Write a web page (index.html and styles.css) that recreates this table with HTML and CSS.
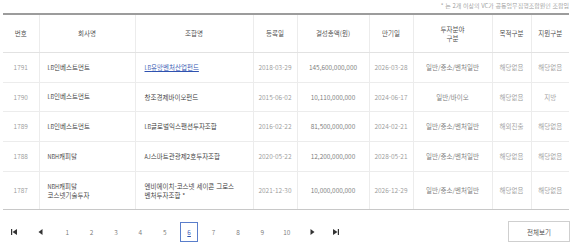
FILE: index.html
```html
<!DOCTYPE html>
<html lang="ko">
<head>
<meta charset="utf-8">
<link rel="stylesheet" href="styles.css">
</head>
<body>
<div class="page">
  <p class="note">* 는 2개 이상의 VC가 공동업무집행조합원인 조합임</p>
  <table class="list">
    <colgroup>
      <col class="c-no"><col class="c-co"><col class="c-fund"><col class="c-reg"><col class="c-amt"><col class="c-exp"><col class="c-field"><col class="c-purp"><col class="c-sup">
    </colgroup>
    <thead>
      <tr>
        <th>번호</th><th>회사명</th><th>조합명</th><th>등록일</th><th>결성총액(원)</th><th>만기일</th><th>투자분야<br>구분</th><th>목적구분</th><th>지원구분</th>
      </tr>
    </thead>
    <tbody>
      <tr>
        <td class="no">1791</td><td class="co"><span class="en">LB</span>인베스트먼트</td><td class="fund"><a href="#"><span class="en">LB</span>유망벤처산업펀드</a></td><td class="date">2018-03-29</td><td class="amt">145,600,000,000</td><td class="date">2026-03-28</td><td class="field">일반/중소/벤처일반</td><td class="etc">해당없음</td><td class="etc">해당없음</td>
      </tr>
      <tr class="r2">
        <td class="no">1790</td><td class="co"><span class="en">LB</span>인베스트먼트</td><td class="fund">창조경제바이오펀드</td><td class="date">2015-06-02</td><td class="amt">10,110,000,000</td><td class="date">2024-06-17</td><td class="field">일반/바이오</td><td class="etc">해당없음</td><td class="etc">지방</td>
      </tr>
      <tr>
        <td class="no">1789</td><td class="co"><span class="en">LB</span>인베스트먼트</td><td class="fund"><span class="en">LB</span>글로벌익스팬션투자조합</td><td class="date">2016-02-22</td><td class="amt">81,500,000,000</td><td class="date">2024-02-21</td><td class="field">일반/중소/벤처일반</td><td class="etc">해외진출</td><td class="etc">해당없음</td>
      </tr>
      <tr>
        <td class="no">1788</td><td class="co"><span class="en">NBH</span>캐피탈</td><td class="fund"><span class="en">AJ</span>스마트관광제2호투자조합</td><td class="date">2020-05-22</td><td class="amt">12,200,000,000</td><td class="date">2028-05-21</td><td class="field">일반/중소/벤처일반</td><td class="etc">해당없음</td><td class="etc">해당없음</td>
      </tr>
      <tr class="last">
        <td class="no">1787</td><td class="co"><span class="en">NBH</span>캐피탈<br>코스넷기술투자</td><td class="fund">엔비에이치-코스넷 세이콘 그로스<br>벤처투자조합 *</td><td class="date">2021-12-30</td><td class="amt">10,000,000,000</td><td class="date">2026-12-29</td><td class="field">일반/중소/벤처일반</td><td class="etc">해당없음</td><td class="etc">해당없음</td>
      </tr>
    </tbody>
  </table>
  <div class="bottom">
    <nav class="pager">
      <a class="pg icon first" href="#" aria-label="처음"><svg width="6" height="6" viewBox="0 0 6 6"><rect x="0" y="0" width="1.2" height="6" fill="#333"/><polygon points="6,0 6,6 1.5,3" fill="#333"/></svg></a>
      <a class="pg icon prev" href="#" aria-label="이전"><svg width="5" height="6" viewBox="0 0 5 6"><polygon points="4.5,0 4.5,6 0.5,3" fill="#333"/></svg></a>
      <a class="pg num" href="#">1</a>
      <a class="pg num" href="#">2</a>
      <a class="pg num" href="#">3</a>
      <a class="pg num" href="#">4</a>
      <a class="pg num" href="#">5</a>
      <a class="pg num on" href="#"><span>6</span></a>
      <a class="pg num" href="#">7</a>
      <a class="pg num" href="#">8</a>
      <a class="pg num" href="#">9</a>
      <a class="pg num" href="#">10</a>
      <a class="pg icon next" href="#" aria-label="다음"><svg width="5" height="6" viewBox="0 0 5 6"><polygon points="0.5,0 0.5,6 4.5,3" fill="#333"/></svg></a>
      <a class="pg icon last-p" href="#" aria-label="마지막"><svg width="6" height="6" viewBox="0 0 6 6"><polygon points="0,0 0,6 4.5,3" fill="#333"/><rect x="4.8" y="0" width="1.2" height="6" fill="#333"/></svg></a>
    </nav>
    <button class="all" type="button">전체보기</button>
  </div>
</div>
</body>
</html>
```

FILE: styles.css
```css
html, body {
  margin: 0;
  padding: 0;
  background: #fff;
}
body {
  font-family: "Noto Sans CJK KR", "Noto Sans", sans-serif;
  font-size: 6.5px;
  font-weight: 350;
  color: #333;
}
.page {
  width: 566px;
  padding: 0 7px 0 3px;
}
.note {
  margin: 0;
  height: 13px;
  line-height: 11px;
  text-align: right;
  font-size: 6px;
  color: #999;
}
.list {
  width: 566px;
  border-collapse: collapse;
  table-layout: fixed;
  border-top: 2px solid #9c9c9c;
  border-bottom: 1px solid #c8c8c8;
}
.c-no { width: 36px; }
.c-co { width: 96px; }
.c-fund { width: 118px; }
.c-reg { width: 44px; }
.c-amt { width: 72px; }
.c-exp { width: 44px; }
.c-field { width: 79px; }
.c-purp { width: 39px; }
.c-sup { width: 38px; }
.en { font-size: 5.5px; }
.list th {
  height: 37px;
  padding: 0;
  font-weight: 350;
  color: #444;
  line-height: 9px;
  text-align: center;
  border-bottom: 1px solid #e2e2e2;
  border-left: 1px solid #ececec;
}
.list td {
  height: 29px;
  padding: 0;
  text-align: center;
  vertical-align: middle;
  line-height: 8.5px;
  border-bottom: 1px solid #ececec;
  border-left: 1px solid #ececec;
  color: #888;
}
.list th:first-child, .list td:first-child { border-left: none; }
.list .r2 td { height: 28px; }
.list .last td { height: 37px; border-bottom: 1px solid #c8c8c8; }
.list td.no { color: #999; }
.list td.co { text-align: left; padding-left: 8px; color: #333; }
.list td.fund { text-align: left; padding-left: 9px; color: #333; }
.list td.fund a { color: #2f52b0; text-decoration: underline; }
.list td.date { color: #999; }
.list td.amt { color: #777; }
.list td.field { color: #777; }
.list td.etc { color: #999; }

.bottom {
  display: flex;
  justify-content: space-between;
  align-items: flex-start;
  margin-top: 11px;
}
.pager {
  display: flex;
  align-items: center;
  margin-left: -2px;
  height: 22px;
}
.pg {
  display: flex;
  align-items: center;
  justify-content: center;
  height: 22px;
  color: #777;
  text-decoration: none;
}
.pg.icon { width: 26px; }
.pg.prev { margin-right: 2px; }
.pg.num { width: 24.4px; }
.pg.next { width: 24px; margin-left: 2px; }
.pg.last-p { width: 22px; }
.pg.on span {
  display: flex;
  align-items: center;
  justify-content: center;
  width: 18px;
  height: 20px;
  border: 1px solid #5a7ecb;
  color: #2f52b0;
  text-decoration: underline;
  box-sizing: border-box;
}
.all {
  width: 62px;
  height: 21px;
  margin: 0 -1px 0 0;
  padding: 0;
  border: 1px solid #cfcfcf;
  background: #fff;
  font-family: "Noto Sans CJK KR", "Noto Sans", sans-serif;
  font-size: 6.5px;
  font-weight: 350;
  color: #444;
}
```
